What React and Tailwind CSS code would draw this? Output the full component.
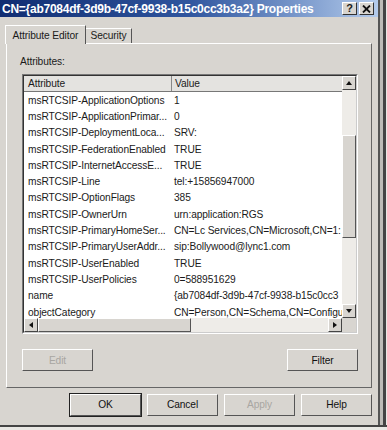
import React from "react";

const rows = [
  ["msRTCSIP-ApplicationOptions", "1"],
  ["msRTCSIP-ApplicationPrimar...", "0"],
  ["msRTCSIP-DeploymentLoca...", "SRV:"],
  ["msRTCSIP-FederationEnabled", "TRUE"],
  ["msRTCSIP-InternetAccessE...", "TRUE"],
  ["msRTCSIP-Line", "tel:+15856947000"],
  ["msRTCSIP-OptionFlags", "385"],
  ["msRTCSIP-OwnerUrn", "urn:application:RGS"],
  ["msRTCSIP-PrimaryHomeSer...", "CN=Lc Services,CN=Microsoft,CN=1:"],
  ["msRTCSIP-PrimaryUserAddr...", "sip:Bollywood@lync1.com"],
  ["msRTCSIP-UserEnabled", "TRUE"],
  ["msRTCSIP-UserPolicies", "0=588951629"],
  ["name", "{ab7084df-3d9b-47cf-9938-b15c0cc3"],
  ["objectCategory", "CN=Person,CN=Schema,CN=Configu"],
];

function Btn({ children, disabled, def, className = "" }) {
  return (
    <div
      className={
        "h-[22px] w-[71px] flex items-center justify-center bg-[#d8d5d0] border border-t-white border-l-white border-r-[#555] border-b-[#555] " +
        (def ? "outline outline-1 outline-[#222] " : "") +
        (disabled ? "text-[#a8a6a2] " : "text-[#111] ") +
        className
      }
    >
      {children}
    </div>
  );
}

function ArrowBtn({ dir }) {
  const paths = {
    up: "M2 7 L5 3 L8 7 Z",
    down: "M2 3 L5 7 L8 3 Z",
    left: "M7 2 L3 5 L7 8 Z",
    right: "M3 2 L7 5 L3 8 Z",
  };
  return (
    <div className="w-[14px] h-[14px] bg-[#d8d5d0] border border-t-white border-l-white border-r-[#444] border-b-[#444] flex items-center justify-center shrink-0">
      <svg width="10" height="10" viewBox="0 0 10 10">
        <path d={paths[dir]} fill="#111" />
      </svg>
    </div>
  );
}

export default function App() {
  return (
    <div
      className="w-[387px] h-[430px] bg-[#e9e8e4] overflow-hidden flex flex-col text-[10.2px] tracking-[-0.1px] text-[#1a1a1a]"
      style={{ fontFamily: "Tahoma, 'Liberation Sans', Arial, sans-serif" }}
    >
      <div className="flex h-[425px]">
        <div className="w-[378px] bg-[#d8d5d0] flex flex-col">
          {/* title bar */}
          <div className="h-[17px] flex items-center bg-gradient-to-r from-[#112d72] via-[#2f559e] to-[#b4cbeb] pl-[2px] pr-[4px]">
            <div className="text-white font-bold text-[12px] leading-none tracking-[-0.25px] whitespace-nowrap">
              CN={"{"}ab7084df-3d9b-47cf-9938-b15c0cc3b3a2{"}"} Properties
            </div>
            <div className="ml-auto flex gap-[2px]">
              <div className="w-[15px] h-[13px] bg-[#d8d5d0] border border-t-white border-l-white border-r-[#333] border-b-[#333] flex items-center justify-center text-[11px] font-bold leading-none">?</div>
              <div className="w-[15px] h-[13px] bg-[#d8d5d0] border border-t-white border-l-white border-r-[#333] border-b-[#333] flex items-center justify-center">
                <svg width="9" height="8" viewBox="0 0 9 8">
                  <path d="M1 0.5 L8 7.5 M8 0.5 L1 7.5" stroke="#111" strokeWidth="1.8" />
                </svg>
              </div>
            </div>
          </div>

          {/* tabs */}
          <div className="flex items-end pl-[5px] mt-[8px] h-[18px] relative z-10">
            <div className="h-[19px] w-[81px] bg-[#d8d5d0] border-t border-l border-white border-r border-r-[#555] flex items-center justify-center mb-[-1px] pt-[1px]">
              Attribute Editor
            </div>
            <div className="h-[15px] w-[46px] border-t border-white border-r border-r-[#555] flex items-center justify-center">
              Security
            </div>
          </div>

          {/* panel */}
          <div className="ml-[6px] w-[366px] h-[345px] border border-t-white border-l-white border-r-[#666] border-b-[#666] flex flex-col">
            <div className="pl-[13px] mt-[13px] leading-none">Attributes:</div>
            {/* list */}
            <div className="ml-[15px] mt-[7px] w-[336px] h-[260px] border border-t-[#777] border-l-[#777] border-r-white border-b-white">
              <div className="w-full h-full border border-t-[#333] border-l-[#333] border-r-[#ccc] border-b-[#ccc] bg-white grid grid-cols-[1fr_14px] grid-rows-[1fr_14px] overflow-hidden">
                <div className="overflow-hidden flex flex-col min-w-0">
                  <div className="flex h-[16px] shrink-0 bg-[#e4e3e0] border-b border-[#777]">
                    <div className="w-[148px] shrink-0 border-r border-[#888] pl-[4px] flex items-center">Attribute</div>
                    <div className="flex-1 pl-[3px] flex items-center">Value</div>
                  </div>
                  {rows.map(([a, v], i) => (
                    <div key={i} className="flex h-[16.3px] shrink-0 items-center whitespace-nowrap">
                      <div className="w-[148px] pl-[4px] shrink-0 overflow-hidden">{a}</div>
                      <div className="pl-[2px] flex-1 min-w-0 overflow-hidden">{v}</div>
                    </div>
                  ))}
                </div>
                {/* vertical scrollbar */}
                <div className="flex flex-col bg-[#eeece8]">
                  <ArrowBtn dir="up" />
                  <div className="h-[45px]" />
                  <div className="h-[103px] bg-[#d8d5d0] border border-t-white border-l-white border-r-[#555] border-b-[#555]" />
                  <div className="flex-1" />
                  <ArrowBtn dir="down" />
                </div>
                {/* horizontal scrollbar */}
                <div className="flex bg-[#eeece8]">
                  <ArrowBtn dir="left" />
                  <div className="w-[153px] bg-[#d8d5d0] border border-t-white border-l-white border-r-[#555] border-b-[#555]" />
                  <div className="flex-1" />
                  <ArrowBtn dir="right" />
                </div>
                <div className="bg-[#d8d5d0]" />
              </div>
            </div>
            <div className="flex justify-between ml-[15px] mr-[13px] mt-[15px]">
              <Btn disabled>Edit</Btn>
              <Btn>Filter</Btn>
            </div>
          </div>

          {/* bottom buttons */}
          <div className="flex justify-end gap-[6px] pr-[6px] mt-[6px]">
            <Btn def>OK</Btn>
            <Btn>Cancel</Btn>
            <Btn disabled>Apply</Btn>
            <Btn>Help</Btn>
          </div>
        </div>
        <div className="w-[2px] bg-[#555]" />
        <div className="w-[3px] bg-[#bdbbb7]" />
        <div className="w-[3px] bg-[#444]" />
      </div>
      <div className="h-[2px] bg-[#444]" />
    </div>
  );
}
